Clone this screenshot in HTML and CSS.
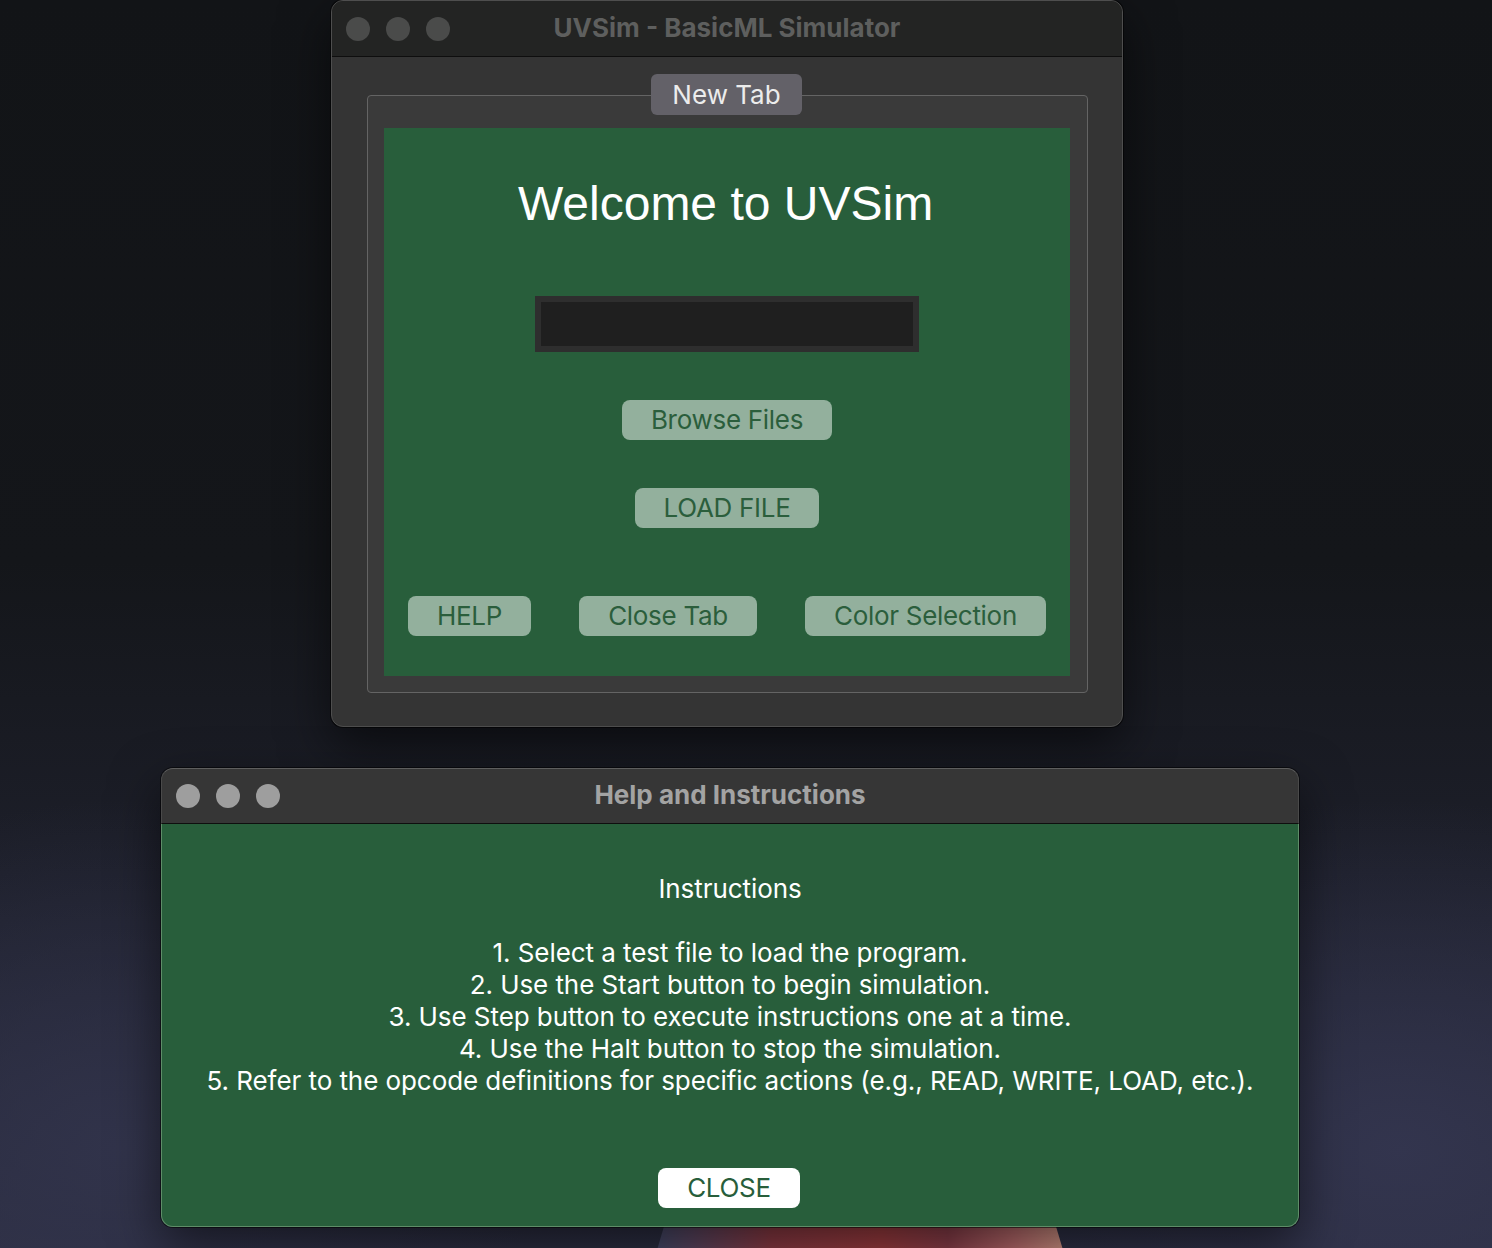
FILE: index.html
```html
<!DOCTYPE html>
<html lang="en">
<head>
<meta charset="utf-8">
<title>UVSim</title>
<link rel="stylesheet" href="styles.css">
</head>
<body>
<div class="desktop">
  <div class="wallpaper-shape"></div>

  <section class="window win-main">
    <header class="titlebar titlebar-inactive">
      <div class="lights"><span class="light"></span><span class="light"></span><span class="light"></span></div>
      <h1 class="win-title">UVSim - BasicML Simulator</h1>
    </header>
    <div class="main-body">
      <div class="tabwidget">
        <div class="tab">New Tab</div>
        <div class="tabframe">
          <div class="panel">
            <h2 class="welcome">Welcome to UVSim</h2>
            <div class="field"><div class="field-inner"></div></div>
            <button class="btn btn-browse">Browse Files</button>
            <button class="btn btn-load">LOAD FILE</button>
            <div class="btn-row">
              <button class="btn">HELP</button>
              <button class="btn">Close Tab</button>
              <button class="btn">Color Selection</button>
            </div>
          </div>
        </div>
      </div>
    </div>
  </section>

  <section class="window win-help">
    <header class="titlebar titlebar-active">
      <div class="lights"><span class="light"></span><span class="light"></span><span class="light"></span></div>
      <h1 class="win-title">Help and Instructions</h1>
    </header>
    <div class="help-body">
      <p class="help-text">Instructions<br><br>1. Select a test file to load the program.<br>2. Use the Start button to begin simulation.<br>3. Use Step button to execute instructions one at a time.<br>4. Use the Halt button to stop the simulation.<br>5. Refer to the opcode definitions for specific actions (e.g., READ, WRITE, LOAD, etc.).</p>
      <button class="btn btn-close">CLOSE</button>
    </div>
  </section>
</div>
</body>
</html>
```

FILE: styles.css
```css
* { box-sizing: border-box; }

html, body {
  margin: 0;
  padding: 0;
}

body {
  font-family: Inter, "Noto Sans", "Liberation Sans", sans-serif;
}

.desktop {
  position: relative;
  width: 1492px;
  height: 1248px;
  overflow: hidden;
  background:
    radial-gradient(ellipse 700px 500px at 1400px 1150px, rgba(52,54,80,0.9), rgba(52,54,80,0) 70%),
    radial-gradient(ellipse 600px 500px at 120px 1150px, rgba(50,52,76,0.9), rgba(50,52,76,0) 70%),
    linear-gradient(180deg, #121417 0%, #14161a 45%, #1d1f2a 70%, #2c2e42 100%);
}

.wallpaper-shape {
  position: absolute;
  left: 640px;
  top: 1100px;
  width: 440px;
  height: 148px;
  clip-path: polygon(14% 0%, 86% 0%, 96% 100%, 4% 100%);
  background: linear-gradient(90deg, #3b4a6c 0%, #5a4560 12%, #8c3a44 30%, #9c3c40 55%, #8a3e4a 70%, #b86a6c 85%, #d8a08c 100%);
}

.window {
  position: absolute;
  display: flex;
  flex-direction: column;
  border-radius: 12px;
  box-shadow: 0 0 0 1px rgba(0,0,0,0.55), 0 18px 50px rgba(0,0,0,0.55);
}

.win-main {
  left: 331px;
  top: 0;
  width: 792px;
  height: 727px;
  border: 1px solid #4e4e4e;
  background: #343434;
  overflow: hidden;
}

.win-help {
  left: 161px;
  top: 768px;
  width: 1138px;
  height: 459px;
}

.titlebar {
  position: relative;
  flex: none;
  height: 56px;
  display: flex;
  align-items: center;
  border-bottom: 1px solid #0e0e0e;
}

.titlebar-inactive {
  background: #232423;
}

.titlebar-active {
  background: #363636;
  border-top: 1px solid #5e5e5e;
  border-left: 1px solid #4a4a4a;
  border-right: 1px solid #4a4a4a;
  border-radius: 12px 12px 0 0;
}

.lights {
  display: flex;
  gap: 16px;
  padding-left: 14px;
}

.light {
  width: 24px;
  height: 24px;
  border-radius: 50%;
}

.titlebar-inactive .light { background: #4a4b4a; }
.titlebar-active .light { background: #9e9e9e; }

.win-title {
  position: absolute;
  left: 0;
  right: 0;
  margin: 0;
  text-align: center;
  font-size: 26px;
  font-weight: 700;
  pointer-events: none;
}

.titlebar-inactive .win-title { color: #5e5f5e; top: 11px; }
.titlebar-active .win-title { color: #a3a3a3; top: 10px; }

.main-body {
  flex: 1;
  padding: 17px 34px 0 35px;
}

.tabwidget {
  display: flex;
  flex-direction: column;
  align-items: center;
}

.tab {
  position: relative;
  z-index: 1;
  width: 151px;
  height: 41px;
  margin-left: -2px;
  background: #636168;
  color: #ececec;
  border-radius: 6px;
  font-size: 26px;
  line-height: 41px;
  text-align: center;
}

.tabframe {
  width: 100%;
  margin-top: -20px;
  border: 1px solid #646464;
  border-radius: 4px;
  background: #3a3a3a;
  padding: 32px 17px 16px 16px;
}

.panel {
  background: #285e3b;
  height: 548px;
  display: flex;
  flex-direction: column;
  align-items: center;
  padding-top: 48px;
}

.welcome {
  margin: 0 0 0 -3px;
  font-family: "Liberation Sans", Arial, sans-serif;
  font-weight: 400;
  font-size: 48px;
  line-height: 55px;
  color: #ffffff;
}

.field {
  margin-top: 65px;
  width: 384px;
  height: 56px;
  background: #2e2e2e;
  padding: 6px;
}

.field-inner {
  width: 100%;
  height: 100%;
  background: #1f1f1f;
}

.btn {
  font-family: Inter, "Noto Sans", sans-serif;
  font-size: 26px;
  letter-spacing: -0.3px;
  height: 40px;
  padding: 0 29px;
  border: none;
  border-radius: 8px;
  background: #93b09d;
  color: #2b5e3c;
  line-height: 40px;
  cursor: default;
}

.btn-browse { margin-top: 48px; }
.btn-load { margin-top: 48px; }

.btn-row {
  margin-top: 68px;
  width: 100%;
  padding: 0 24px;
  display: flex;
  justify-content: space-between;
}

.help-body {
  flex: 1;
  display: flex;
  flex-direction: column;
  align-items: center;
  background: #285e3b;
  border: 1px solid #5e8d68;
  border-top: none;
  border-radius: 0 0 12px 12px;
  padding: 49px 0 18px;
}

.help-text {
  margin: 0;
  text-align: center;
  color: #ffffff;
  font-size: 26px;
  letter-spacing: -0.07px;
  line-height: 32px;
}

.btn-close {
  margin-top: auto;
  margin-left: -2px;
  background: #ffffff;
  color: #285e3b;
}
```
